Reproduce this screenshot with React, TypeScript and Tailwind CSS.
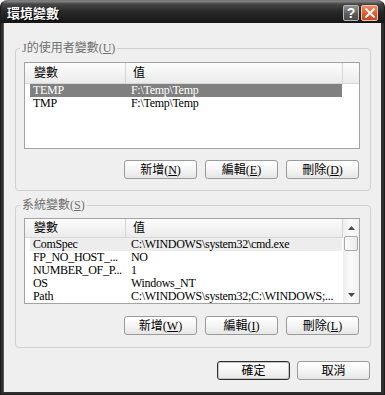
import React from "react";

const F = "font-['Liberation_Serif','Noto_Sans_CJK_TC',serif]";

function Btn({ children, primary = false }: { children: React.ReactNode; primary?: boolean }) {
  return (
    <div
      className={`w-[73px] h-[19px] flex items-center justify-center rounded-[3px] border text-[12px] leading-[14px] text-black bg-[linear-gradient(to_bottom,#ffffff_0%,#f5f5f5_50%,#e6e6e6_100%)] ${
        primary ? "border-[#2e2e2e] shadow-[inset_0_0_0_1px_#c4c4c4]" : "border-[#9a9a9a]"
      }`}
    >
      {children}
    </div>
  );
}

function Acc({ label, k }: { label: string; k: string }) {
  return (
    <span>
      {label}(<span className="underline">{k}</span>)
    </span>
  );
}

function Header() {
  return (
    <div className="flex h-[21px] border-b border-[#d8d8d8] bg-[linear-gradient(to_bottom,#fcfcfc,#f4f4f4_50%,#ebebeb)] text-[12px] leading-[14px] text-black">
      <div className="w-[101px] pl-[9px] flex items-center border-r border-[#d4d4d4]">變數</div>
      <div className="w-[217px] pl-[7px] flex items-center border-r border-[#d4d4d4]">值</div>
      <div className="flex-1" />
    </div>
  );
}

function Row({ a, b, sel = false, hi = false }: { a: string; b: string; sel?: boolean; hi?: boolean }) {
  return (
    <div
      className={`ml-[5px] w-[312px] h-[13px] flex text-[12px] leading-[13px] tracking-[-0.3px] ${
        sel ? "bg-[#808080] text-white" : hi ? "bg-[#ededed] text-black" : "text-black"
      }`}
    >
      <div className="w-[95px] pl-[3px] whitespace-nowrap overflow-hidden">{a}</div>
      <div className="w-[217px] pl-[6px] whitespace-nowrap overflow-hidden">{b}</div>
    </div>
  );
}

function Group({
  title,
  k,
  pt,
  children,
}: {
  title: string;
  k: string;
  pt: string;
  children: React.ReactNode;
}) {
  return (
    <fieldset className="border border-[#d0d0d0] rounded-[4px] px-0">
      <legend className="ml-[4px] px-[2px] text-[12px] leading-[14px] text-[#707070]">
        {title}(<span className="underline">{k}</span>)
      </legend>
      <div className={`pl-[8px] pr-[10px] ${pt}`}>{children}</div>
    </fieldset>
  );
}

export default function App() {
  return (
    <div className={`w-[385px] h-[395px] bg-white ${F}`}>
      <div className="w-[385px] h-[395px] flex flex-col rounded-t-[7px] bg-[#2f2f2f] border border-[#1c1c1c] border-t-[#7a7a7a]">
        {/* Title bar */}
        <div className="h-[23px] flex items-center rounded-t-[7px] bg-[linear-gradient(to_bottom,#8a8a8a_0px,#474747_3px,#2a2a2a_10px,#161616_100%)]">
          <div className="ml-[6px] mt-[1px] text-white font-bold text-[13px] leading-[16px] font-['Noto_Sans_CJK_TC',sans-serif] [text-shadow:1px_1px_0_#000]">
            環境變數
          </div>
          <div className="ml-auto mr-[6px] mt-[1px] flex gap-[2px]">
            <div className="w-[16px] h-[16px] rounded-[2px] border border-[#b8b8b8] bg-[linear-gradient(to_bottom,#909090,#5a5a5a_60%,#4a4a4a)] flex items-center justify-center text-white font-bold text-[14px] leading-none font-['Liberation_Sans',sans-serif]">
              ?
            </div>
            <div className="w-[17px] h-[16px] rounded-[2px] border border-[#f3c3ad] bg-[linear-gradient(to_bottom,#f28a62,#dc5a30_55%,#c8451e)] flex items-center justify-center">
              <svg width="10" height="10" viewBox="0 0 10 10">
                <path d="M1.2 1.2L8.8 8.8M8.8 1.2L1.2 8.8" stroke="white" strokeWidth="2" strokeLinecap="square" />
              </svg>
            </div>
          </div>
        </div>

        {/* Body */}
        <div className="flex-1 ml-[2px] mr-[3px] mb-[2px] bg-[#efefef] border-l border-[#5a5a5a] pl-[11px] pr-[10px] pt-[18px] pb-[12px] flex flex-col">
          <Group title="J的使用者變數" k="U" pt="pt-[7px]">
            <div className="h-[87px] border border-[#a3a3a3] bg-white overflow-hidden">
              <Header />
              <Row a="TEMP" b="F:\Temp\Temp" sel />
              <Row a="TMP" b="F:\Temp\Temp" />
            </div>
            <div className="mt-[11px] mb-[11px] pr-[1px] flex justify-end gap-[8px]">
              <Btn>
                <Acc label="新增" k="N" />
              </Btn>
              <Btn>
                <Acc label="編輯" k="E" />
              </Btn>
              <Btn>
                <Acc label="刪除" k="D" />
              </Btn>
            </div>
          </Group>

          <div className="mt-[7px]">
            <Group title="系統變數" k="S" pt="pt-[6px]">
              <div className="h-[86px] border border-[#a3a3a3] bg-white overflow-hidden flex">
                <div className="w-[318px] flex flex-col">
                  <Header />
                  <Row a="ComSpec" b="C:\WINDOWS\system32\cmd.exe" hi />
                  <Row a="FP_NO_HOST_..." b="NO" />
                  <Row a="NUMBER_OF_P..." b="1" />
                  <Row a="OS" b="Windows_NT" />
                  <Row a="Path" b="C:\WINDOWS\system32;C:\WINDOWS;..." />
                </div>
                <div className="flex-1 flex flex-col bg-[linear-gradient(to_right,#eeeeee,#fafafa_50%,#f0f0f0)]">
                  <div className="h-[17px] flex items-center justify-center">
                    <svg width="7" height="4" viewBox="0 0 7 4">
                      <path d="M3.5 0L7 4H0Z" fill="#4a4a4a" />
                    </svg>
                  </div>
                  <div className="mx-[1px] h-[15px] rounded-[2px] border border-[#a8a8a8] bg-[linear-gradient(to_right,#fdfdfd,#e9e9e9)]" />
                  <div className="flex-1" />
                  <div className="h-[16px] flex items-center justify-center">
                    <svg width="7" height="4" viewBox="0 0 7 4">
                      <path d="M0 0H7L3.5 4Z" fill="#4a4a4a" />
                    </svg>
                  </div>
                </div>
              </div>
              <div className="mt-[12px] mb-[12px] pr-[1px] flex justify-end gap-[8px]">
                <Btn>
                  <Acc label="新增" k="W" />
                </Btn>
                <Btn>
                  <Acc label="編輯" k="I" />
                </Btn>
                <Btn>
                  <Acc label="刪除" k="L" />
                </Btn>
              </div>
            </Group>
          </div>

          <div className="mt-[13px] pr-[1px] flex justify-end gap-[7px]">
            <Btn primary>確定</Btn>
            <Btn>取消</Btn>
          </div>
        </div>
      </div>
    </div>
  );
}
